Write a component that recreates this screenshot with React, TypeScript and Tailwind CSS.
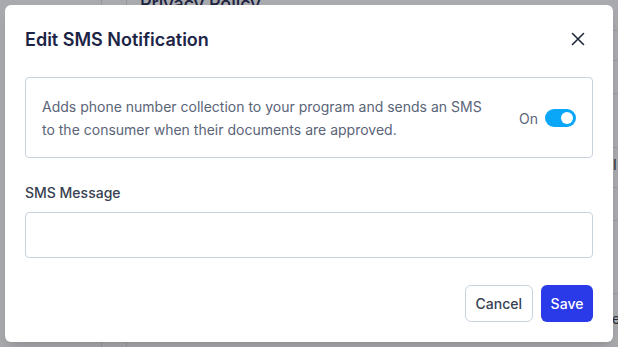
import { useState } from "react";

function PageBehind() {
	return (
		<div className="absolute inset-0 bg-[#a9aaad]">
			<div className="absolute top-0 bottom-0 left-[101px] w-px bg-[#97989c]" />
			<div className="absolute top-0 bottom-0 left-[126px] w-px bg-[#97989c]" />
			<div className="absolute left-[140px] top-[-10px] text-[18px] font-medium text-[#1b2140]">
				Privacy Policy
			</div>
			{[30, 60, 93, 147, 187, 220, 293].map((y) => (
				<div
					key={y}
					className="absolute left-[612px] right-0 h-px bg-[#9a9b9f]"
					style={{ top: y }}
				/>
			))}
			<div className="absolute left-[613px] top-[154px] text-[14px] text-[#2a2f3a]">I</div>
			<div className="absolute left-[612px] top-[308px] text-[14px] text-[#2a2f3a]">e</div>
		</div>
	);
}

function Toggle({ on, onChange }: { on: boolean; onChange: () => void }) {
	return (
		<button
			type="button"
			onClick={onChange}
			className={`flex h-[18px] w-[31px] items-center rounded-full px-[3px] ${
				on ? "justify-end bg-[#0aa6f7]" : "justify-start bg-gray-300"
			}`}
		>
			<span className="h-[12px] w-[12px] rounded-full bg-white" />
		</button>
	);
}

export default function App() {
	const [on, setOn] = useState(true);
	const [message, setMessage] = useState("");

	return (
		<div className="relative h-[347px] w-[618px] overflow-hidden font-['Inter',sans-serif]">
			<PageBehind />

			<div className="absolute left-[5px] top-[5px] flex h-[337px] w-[608px] flex-col rounded-md bg-white px-5 pt-5 pb-5 shadow-lg">
				<div className="flex h-7 items-center justify-between">
					<h2 className="text-[18px] font-semibold text-[#1c2446]">Edit SMS Notification</h2>
					<button type="button" className="mr-[8px] text-[#1e293b]">
						<svg width="14" height="14" viewBox="0 0 14 14" fill="none">
							<path d="M1.5 1.5l11 11M12.5 1.5l-11 11" stroke="currentColor" strokeWidth="1.6" strokeLinecap="round" />
						</svg>
					</button>
				</div>

				<div className="mt-6 flex items-center justify-between rounded border border-[#c9d3df] pt-[17px] pb-[16px] pl-4 pr-4">
					<p className="text-[14px] leading-[23px] text-[#5a6478]">
						Adds phone number collection to your program and sends an SMS
						<br />
						to the consumer when their documents are approved.
					</p>
					<div className="flex items-center gap-[7px]">
						<span className="text-[14px] text-[#5a6478]">{on ? "On" : "Off"}</span>
						<Toggle on={on} onChange={() => setOn(!on)} />
					</div>
				</div>

				<label className="mt-[25px] text-[14px] font-medium leading-5 text-[#374151]">SMS Message</label>
				<input
					value={message}
					onChange={(e) => setMessage(e.target.value)}
					className="mt-[9px] h-[46px] w-full shrink-0 rounded border border-[#c9d3df] px-3 text-[14px] outline-none"
				/>

				<div className="mt-auto flex justify-end gap-2">
					<button
						type="button"
						className="h-[37px] rounded-md border border-[#c9d3df] px-[10px] text-[14px] font-medium text-[#374151]"
					>
						Cancel
					</button>
					<button
						type="button"
						className="h-[37px] w-[52px] rounded-md bg-[#2a3ae9] text-[14px] font-medium text-white"
					>
						Save
					</button>
				</div>
			</div>
		</div>
	);
}
